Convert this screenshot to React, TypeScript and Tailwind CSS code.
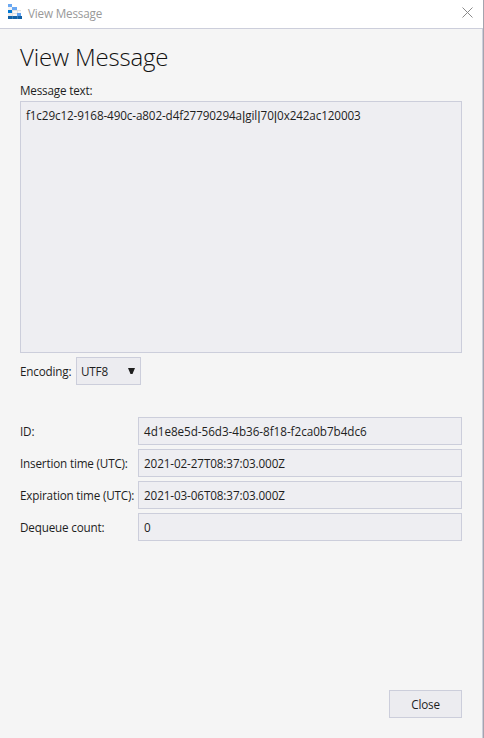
const rows = [
  { label: 'ID:', value: '4d1e8e5d-56d3-4b36-8f18-f2ca0b7b4dc6', spacing: 'tracking-[-0.04px]' },
  { label: 'Insertion time (UTC):', value: '2021-02-27T08:37:03.000Z', spacing: 'tracking-[-0.11px]' },
  { label: 'Expiration time (UTC):', value: '2021-03-06T08:37:03.000Z', spacing: 'tracking-[-0.11px]' },
  { label: 'Dequeue count:', value: '0', spacing: 'tracking-normal' },
];

const messageParts = ['f1c29c12-9168-490c-a802-d4f27790294a', 'gil', '70', '0x242ac120003'];

function AppIcon() {
  return (
    <svg width="14" height="16" viewBox="0 0 14 16" shapeRendering="crispEdges">
      <rect x="0" y="3" width="4" height="3" fill="#f3f3f3" />
      <rect x="4" y="6" width="9" height="6" fill="#e0e0e0" />
      <rect x="5" y="7" width="4" height="2" fill="#f8f8f8" />
      <rect x="10" y="7" width="3" height="2" fill="#f8f8f8" />
      <rect x="0" y="9" width="4" height="3" fill="#eaeaea" />
      <rect x="5" y="10" width="4" height="2" fill="#f5f5f5" />
      <rect x="0" y="0" width="4" height="3" fill="#6aa8f2" />
      <rect x="4" y="3" width="5" height="3" fill="#6aa8f2" />
      <rect x="0" y="6" width="4" height="3" fill="#0078d4" />
      <rect x="9" y="9" width="4" height="3" fill="#5ea0ef" />
      <rect x="0" y="12" width="14" height="3" fill="#1060a5" />
      <rect x="4" y="12" width="1" height="3" fill="#3a80b8" />
      <rect x="9" y="12" width="1" height="3" fill="#3a80b8" />
    </svg>
  );
}

export default function App() {
  return (
    <div className="flex h-[738px] w-[484px] overflow-hidden bg-[#f5f5f5] text-[11.7px] leading-4 tracking-[-0.18px] text-[#1e1e1e] [font-family:'Open_Sans','Noto_Sans',sans-serif]">
      <div className="flex w-[483px] flex-col">
        <header className="flex h-[29px] shrink-0 items-start border-b border-[#cccedb] bg-white pl-2">
          <div className="mt-1">
            <AppIcon />
          </div>
          <span className="mt-[5px] ml-1.5 whitespace-nowrap text-[#999999]">View Message</span>
          <svg className="mt-[7px] mr-[10px] ml-auto" width="11" height="11" viewBox="0 0 11 11" fill="none" stroke="#8a8a8a" strokeWidth="1">
            <path d="M.5 .5 10.5 10.5M10.5 .5 .5 10.5" />
          </svg>
        </header>
        <main className="flex flex-1 flex-col border-r border-[#cccedb] pr-5 pl-5">
          <h1 className="mt-3 h-8 text-[24px] leading-8 font-[350] tracking-[-0.2px] whitespace-nowrap text-[#111]">View Message</h1>
          <label className="mt-[9px] h-[19px] whitespace-nowrap">Message text:</label>
          <div className="h-[252px] shrink-0 border border-[#cccedb] bg-[#eeeef2] px-[5px] py-[5px] tracking-[-0.12px] whitespace-nowrap">
            {messageParts.map((part, i) => (
              <span key={part}>
                {i > 0 && <span className="text-[13px] tracking-normal [font-family:'Liberation_Sans',sans-serif]">|</span>}
                {part}
              </span>
            ))}
          </div>
          <div className="mt-1 flex h-7 items-center">
            <span className="w-14 whitespace-nowrap">Encoding:</span>
            <div className="flex h-7 w-[65px] items-center justify-between border border-[#cccedb] bg-[#ececf0] pr-[5px] pl-1">
              <span>UTF8</span>
              <svg width="7" height="6" viewBox="0 0 7 6" fill="#1e1e1e">
                <path d="M0 0H7L4.5 6H2.5Z" />
              </svg>
            </div>
          </div>
          <div className="mt-8 flex flex-col gap-1">
            {rows.map((r) => (
              <div key={r.label} className="flex h-7 items-center">
                <span className="w-[118px] whitespace-nowrap">{r.label}</span>
                <div className="flex h-7 flex-1 items-center border border-[#cccedb] bg-[#eeeef2] px-[5px] whitespace-nowrap">
                  <span className={r.spacing}>{r.value}</span>
                </div>
              </div>
            ))}
          </div>
          <button className="mt-auto mb-5 h-7 w-[73px] self-end border border-[#cccedb] bg-[#ececf0]">Close</button>
        </main>
      </div>
      <div className="w-px bg-[#a4a4ae]" />
    </div>
  );
}
